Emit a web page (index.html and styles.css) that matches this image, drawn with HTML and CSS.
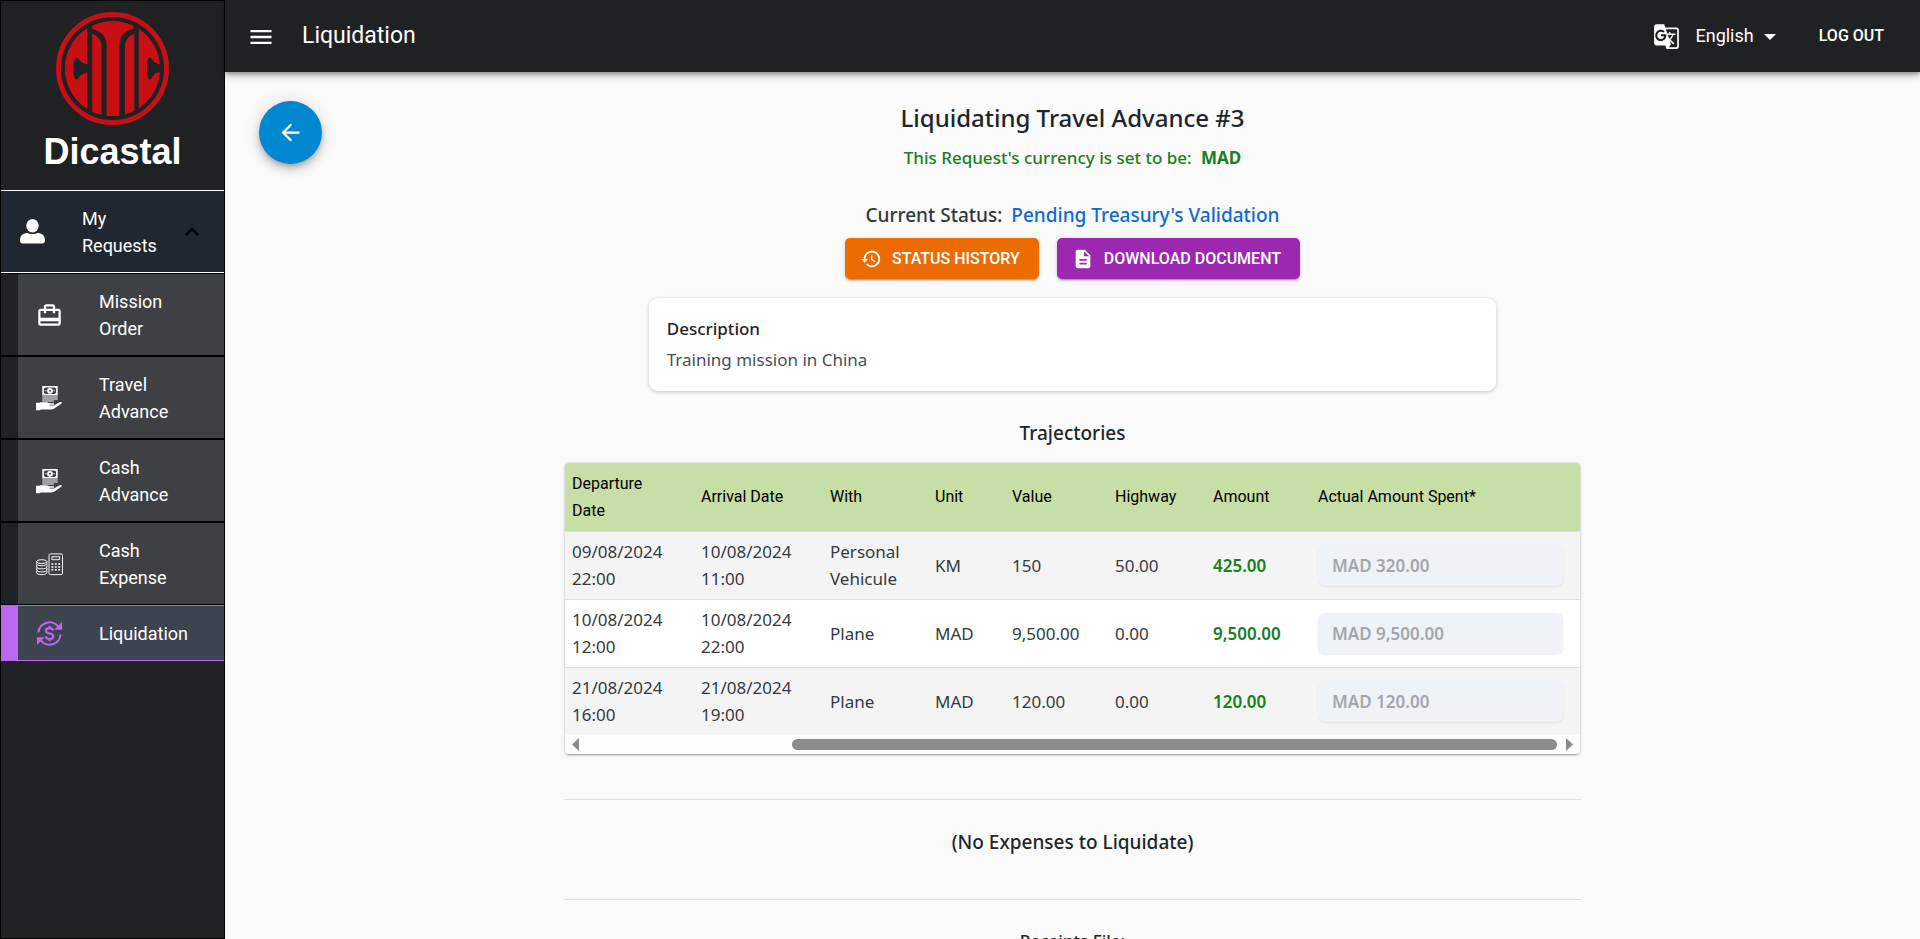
FILE: index.html
```html
<!DOCTYPE html>
<html lang="en">
<head>
<meta charset="utf-8">
<title>Liquidation</title>
<meta name="viewport" content="width=device-width, initial-scale=1">
<link rel="stylesheet" href="styles.css">
</head>
<body>
<svg class="defs" aria-hidden="true">
  <symbol id="hand-cash" viewBox="0 0 28 26">
    <path fill-rule="evenodd" d="M6.500 0h16v10h-16zM9.500 1.700L8.200 3v4l1.300 1.300h10L20.800 7V3l-1.300-1.300z"/>
    <path fill-rule="evenodd" d="M14.500 2a3 3 0 1 0 0 6 3 3 0 0 0 0-6zm0 2a1 1 0 1 1 0 2 1 1 0 0 1 0-2z"/>
    <path d="M9.500 4.500H11v1H9.500zM18 4.500h1.500v1H18zM6.500 11h16v1h-16zM6.500 13h16v1h-16zM6.500 15h12v1h-12z"/>
    <path d="M0 17.500h3.500l1-.5h6c1.500 0 2.500.8 4 .8h3.500c1.200 0 1.200 1.700 0 1.700h-4v.8h4.500l6-3.300c1.500-.8 3 .2 2 1.200l-7 5c-1 .8-2 1.200-3.500 1.200H5l-1 .8H0z"/>
  </symbol>
</svg>
<div class="app">
  <aside class="sidebar">
    <div class="brand">
      <svg class="brand-logo" viewBox="0 0 114 114" role="img" aria-label="CITIC">
        <defs>
          <clipPath id="disc"><circle cx="57" cy="57" r="48"/></clipPath>
        </defs>
        <circle class="line" cx="57" cy="57" r="54.500" stroke="#c80f16" stroke-width="5"/>
        <g clip-path="url(#disc)" fill="#c80f16">
          <path d="M31.500 0V53C27 52 24 50 22 46.500c-1-.8-2.500-.8-3 .5-2 6-2 14 0 20 .5 1.300 2 1.300 3 .5 2-3.500 5-5.500 9.500-6.500V114H0V0z"/>
          <path d="M83.500 0V114H114V61h-9c-4.500-1-7.500 3-9 6.500-1 .8-2.500.6-3-.5-1.500-6-1.500-14 0-20 .5-1.300 2-1.300 3-.5 1.500 3.500 4.500 5.500 9 6.500h9V0z"/>
          <path d="M36.500 22c6 2 9.500 7 9.500 13v79h-9.500zM79 22c-6 2-9.500 7-9.500 13v79H79z"/>
          <path d="M36.500 14c11-7 31-7 41.500 0v3c-10 3-14 8-14 16v72H51V33c0-8-5-13-14.500-16z"/>
        </g>
      </svg>
      <span class="brand-name">Dicastal</span>
    </div>
    <nav>
      <button class="group" type="button" aria-expanded="true">
        <svg class="icon-user" viewBox="0 0 26 26" aria-hidden="true"><ellipse cx="13" cy="7" rx="6.500" ry="7"/><path d="M0 22c0-5 3.500-7.500 8-7.500 2 1.500 8 1.500 10 0 4.500 0 8 2.500 8 7.500 0 2-1 3.500-3 3.500H3c-2 0-3-1.500-3-3.500z"/></svg>
        <span class="nav-label">My Requests</span>
        <svg class="icon-chevron line" viewBox="0 0 14 9" stroke="#000" stroke-width="2.500" aria-hidden="true"><path d="M1 8l6-6 6 6"/></svg>
      </button>
      <ul class="subnav">
        <li><a class="item" href="#mission"><svg class="nav-icon" viewBox="0 0 24 24" aria-hidden="true"><path d="M20 6h-3V4c0-1.110-.89-2-2-2H9c-1.110 0-2 .89-2 2v2H4c-1.110 0-2 .89-2 2v11c0 1.110.89 2 2 2h16c1.110 0 2-.89 2-2V8c0-1.110-.89-2-2-2zM9 4h6v2H9V4zm11 15H4v-2h16v2zm0-5H4V8h3v2h2V8h6v2h2V8h3v6z"/></svg><span class="nav-label">Mission Order</span></a></li>
        <li><a class="item" href="#travel"><svg class="nav-icon" aria-hidden="true"><use href="#hand-cash"/></svg><span class="nav-label">Travel Advance</span></a></li>
        <li><a class="item" href="#cash-advance"><svg class="nav-icon" aria-hidden="true"><use href="#hand-cash"/></svg><span class="nav-label">Cash Advance</span></a></li>
        <li><a class="item" href="#cash-expense"><svg class="nav-icon line" viewBox="0 0 28 26" stroke="#fff" aria-hidden="true"><rect x="13.500" y="2" width="14" height="21.500" rx="1.500"/><path d="M16.500 5h8v3h-8z"/><path d="M16 12.500h2m1.500 0h2m1.500 0h2M16 15.500h2m1.500 0h2m1.500 0h2M16 18.500h2m1.500 0h2m1.500 0h2" stroke-width="1.500"/><ellipse cx="6" cy="10" rx="5.300" ry="2"/><path d="M.7 10v2.200c0 2.700 10.600 2.700 10.600 0V10M.7 13v2.500c0 2.700 10.600 2.700 10.600 0V13M.7 16.200v2.500c0 2.700 10.600 2.700 10.600 0v-2.500M.7 19.500v2c0 2.700 10.600 2.700 10.600 0v-2"/></svg><span class="nav-label">Cash Expense</span></a></li>
        <li class="active"><a class="item" href="#liquidation" aria-current="page"><svg class="nav-icon line" viewBox="0 0 28 28" stroke="#bb68f0" stroke-width="2.200" aria-hidden="true"><path d="M2.500 13A11.500 11.500 0 0 1 23.500 7.500M25.500 15A11.500 11.500 0 0 1 4.500 20.500"/><path class="solid" d="M27 2v8h-8zM1 26v-8h8z"/><path d="M17.800 10.800c-.5-1.800-1.800-2.400-3.800-2.400-2.200 0-3.800 1-3.800 2.800 0 4 7.800 1.700 7.800 5.700 0 1.700-1.700 2.800-4 2.800s-3.700-.8-4-2.700M14 6v2.500M14 19.500V22"/></svg><span class="nav-label">Liquidation</span></a></li>
      </ul>
    </nav>
  </aside>

  <div class="page">
    <header class="topbar">
      <button class="icon-button" type="button" aria-label="Toggle menu"><svg class="icon-menu" viewBox="0 0 24 24" aria-hidden="true"><path d="M3 18h18v-2H3v2zm0-5h18v-2H3v2zm0-7v2h18V6H3z"/></svg></button>
      <span class="topbar-title">Liquidation</span>
      <button class="language" type="button">
        <svg class="icon-translate" viewBox="0 0 24 24" aria-hidden="true"><path d="M21 4H11l-1-3H3c-1.100 0-2 .9-2 2v15c0 1.100.9 2 2 2h8l1 3h9c1.100 0 2-.9 2-2V6c0-1.100-.9-2-2-2zM7 16c-2.760 0-5-2.240-5-5s2.240-5 5-5c1.350 0 2.480.5 3.350 1.300L9.030 8.570c-.38-.36-1.040-.78-2.030-.78-1.740 0-3.150 1.440-3.150 3.210S5.260 14.210 7 14.210c2.010 0 2.840-1.440 2.920-2.410H7v-1.710h4.680c.07.31.12.61.12 1.020C11.800 13.970 9.890 16 7 16zm6.170-5.420h3.700c-.43 1.250-1.110 2.430-2.050 3.470-.31-.35-.6-.72-.86-1.100l-.79-2.370zm8.330 9.920c0 .55-.45 1-1 1H14l2-2.500-1.040-3.100 3.100 3.100.92-.92-3.300-3.250.02-.02c1.130-1.250 1.930-2.690 2.400-4.220H20v-1.300h-4.530V8h-1.290v1.290h-1.440L11.460 5.500h9.040c.55 0 1 .45 1 1v14z"/></svg>
        <span>English</span>
        <svg class="icon-caret" viewBox="0 0 12 6" aria-hidden="true"><path d="M0 0h12L6 6z"/></svg>
      </button>
      <button class="logout" type="button">LOG OUT</button>
    </header>

    <main class="content">
      <button class="back" type="button" aria-label="Back"><svg class="icon-back" viewBox="0 0 24 24" aria-hidden="true"><path d="M20 11H7.830l5.590-5.590L12 4l-8 8 8 8 1.410-1.410L7.830 13H20v-2z"/></svg></button>

      <h1 class="title">Liquidating Travel Advance #3</h1>
      <p class="currency">This Request's currency is set to be: <strong>MAD</strong></p>
      <p class="status">Current Status: <span class="status-value">Pending Treasury's Validation</span></p>

      <div class="actions">
        <button class="button button-orange" type="button"><svg class="button-icon" viewBox="0 0 24 24" aria-hidden="true"><path d="M13 3c-4.970 0-9 4.030-9 9H1l3.890 3.890.07.14L9 12H6c0-3.870 3.130-7 7-7s7 3.130 7 7-3.130 7-7 7c-1.930 0-3.680-.79-4.940-2.060l-1.420 1.420C8.270 19.990 10.510 21 13 21c4.970 0 9-4.030 9-9s-4.030-9-9-9zm-1 5v5l4.280 2.540.72-1.210-3.500-2.080V8H12z"/></svg>STATUS HISTORY</button>
        <button class="button button-purple" type="button"><svg class="button-icon" viewBox="0 0 24 24" aria-hidden="true"><path d="M14 2H6c-1.100 0-1.990.9-1.990 2L4 20c0 1.100.89 2 1.990 2H18c1.100 0 2-.9 2-2V8l-6-6zm2 16H8v-2h8v2zm0-4H8v-2h8v2zm-3-5V3.500L18.500 9H13z"/></svg>DOWNLOAD DOCUMENT</button>
      </div>

      <section class="card">
        <h2 class="card-title">Description</h2>
        <p class="card-text">Training mission in China</p>
      </section>

      <h2 class="section-title">Trajectories</h2>
      <div class="table-frame">
        <table class="grid">
          <colgroup><col class="col-date"><col class="col-date"><col class="col-with"><col class="col-unit"><col class="col-value"><col class="col-highway"><col class="col-amount"><col></colgroup>
          <thead>
            <tr><th>Departure Date</th><th>Arrival Date</th><th>With</th><th>Unit</th><th>Value</th><th>Highway</th><th>Amount</th><th>Actual Amount Spent*</th></tr>
          </thead>
          <tbody>
            <tr><td>09/08/2024 22:00</td><td>10/08/2024 11:00</td><td>Personal Vehicule</td><td>KM</td><td>150</td><td>50.00</td><td class="amount">425.00</td><td><input class="spent" type="text" aria-label="Actual amount spent, trajectory 1" value="MAD 320.00" disabled></td></tr>
            <tr><td>10/08/2024 12:00</td><td>10/08/2024 22:00</td><td>Plane</td><td>MAD</td><td>9,500.00</td><td>0.00</td><td class="amount">9,500.00</td><td><input class="spent" type="text" aria-label="Actual amount spent, trajectory 2" value="MAD 9,500.00" disabled></td></tr>
            <tr><td>21/08/2024 16:00</td><td>21/08/2024 19:00</td><td>Plane</td><td>MAD</td><td>120.00</td><td>0.00</td><td class="amount">120.00</td><td><input class="spent" type="text" aria-label="Actual amount spent, trajectory 3" value="MAD 120.00" disabled></td></tr>
          </tbody>
        </table>
        <div class="scrollbar" aria-hidden="true">
          <svg class="scroll-arrow" viewBox="0 0 7 13"><path d="M7 0v13L0 6.500z"/></svg>
          <div class="track"><div class="thumb"></div></div>
          <svg class="scroll-arrow" viewBox="0 0 7 13"><path d="M0 0v13l7-6.500z"/></svg>
        </div>
      </div>

      <hr class="divider">
      <h2 class="section-title section-empty">(No Expenses to Liquidate)</h2>
      <hr class="divider divider-last">
      <h2 class="section-receipts">Receipts File:</h2>
    </main>
  </div>
</div>
</body>
</html>
```
FILE: styles.css
```css
*, *::before, *::after { box-sizing: border-box; }
body {
  margin: 0;
  background: #fafafa;
  color: #212529;
  font-family: "Noto Sans", "Open Sans", sans-serif;
  font-size: 17px;
  line-height: 27px;
}
h1, h2, p, ul { margin: 0; padding: 0; }
ul { list-style: none; }
button { border: 0; margin: 0; padding: 0; background: none; color: inherit; font: inherit; cursor: pointer; }
svg { display: block; flex: none; fill: currentColor; }
.line { fill: none; }
.solid { fill: #bb68f0; stroke: none; }
.defs { position: absolute; width: 0; height: 0; }

.app { display: flex; height: 100vh; }

/* Sidebar */
.sidebar {
  flex: none;
  width: 225px;
  background: #202123;
  border: 1px solid #000;
  color: #fff;
  font-family: Roboto, sans-serif;
  font-size: 18px;
}
.brand { display: flex; flex-direction: column; align-items: center; height: 189px; padding-top: 11px; }
.brand-logo { width: 113px; height: 113px; }
.brand-name { margin-top: 6px; font: bold 36px/41px "Liberation Sans", Arial, sans-serif; }
.group {
  display: flex;
  align-items: center;
  width: 100%;
  height: 83px;
  padding: 0 25px 0 19px;
  background: #212730;
  border-top: 1px solid #fff;
  border-bottom: 1px solid #fff;
  text-align: left;
}
.icon-user { width: 25px; height: 25px; }
.group .nav-label { width: 80px; margin-left: 37px; margin-right: auto; }
.icon-chevron { width: 14px; height: 9px; }
.subnav li { padding-left: 17px; border-top: 1px solid #000; border-bottom: 1px solid #000; }
.item {
  display: flex;
  align-items: center;
  padding: 14px 20px 13px 18px;
  background: #3f4043;
  color: #fff;
  text-decoration: none;
}
.subnav .active { background: #bb68f0; border-color: #bb68f0; }
.active .item { background: #3d444f; }
.nav-icon { width: 27px; height: 27px; }
.item .nav-label { margin-left: 36px; }

/* Top bar */
.page { display: flex; flex: 1; flex-direction: column; min-width: 0; }
.topbar {
  z-index: 1;
  display: flex;
  flex: none;
  align-items: center;
  height: 72px;
  padding: 0 36px 2px 22px;
  background: #202123;
  box-shadow: 0 2px 4px rgba(0, 0, 0, .3), 0 4px 8px rgba(0, 0, 0, .2);
  color: #fff;
  font-family: Roboto, sans-serif;
  font-size: 18px;
}
.icon-button { padding-top: 3px; }
.icon-menu { width: 28px; height: 28px; }
.topbar-title { margin-left: 27px; font-size: 23px; }
.language { display: flex; align-items: center; margin-left: auto; }
.icon-translate { width: 27px; height: 27px; margin: 3px 15px 0 0; }
.icon-caret { width: 12px; height: 6px; margin: 3px 0 0 10px; }
.logout { margin-left: 43px; font-size: 16px; font-weight: 500; }

/* Content */
.content {
  position: relative;
  display: flex;
  flex: 1;
  flex-direction: column;
  align-items: center;
  overflow-y: auto;
  padding-top: 28px;
  scrollbar-width: none;
}
.content > * { flex: none; }
.back {
  position: absolute;
  top: 29px;
  left: 34px;
  display: grid;
  place-items: center;
  width: 63px;
  height: 63px;
  border-radius: 50%;
  background: #0288d1;
  box-shadow: 0 3px 5px -1px rgba(0, 0, 0, .2), 0 6px 10px rgba(0, 0, 0, .14), 0 1px 18px rgba(0, 0, 0, .12);
  color: #fff;
}
.icon-back { width: 27px; height: 27px; }
.title { font-size: 24px; font-weight: 500; line-height: 36px; }
.currency { margin-top: 8px; color: #1b7e20; font-weight: 500; }
.currency strong { margin-left: 5px; font-weight: 700; }
.status { margin-top: 31px; color: #33373c; font-size: 19px; font-weight: 500; }
.status-value { margin-left: 4px; color: #0f6ad0; }
.actions { display: flex; gap: 18px; margin-top: 9px; }
.button {
  display: flex;
  align-items: center;
  height: 41px;
  padding: 0 19px 0 15px;
  border-radius: 5px;
  box-shadow: 0 3px 1px -2px rgba(0, 0, 0, .2), 0 2px 2px rgba(0, 0, 0, .14), 0 1px 5px rgba(0, 0, 0, .12);
  color: #fff;
  font: 500 16px/27px Roboto, sans-serif;
}
.button-orange { background: #ed6c02; }
.button-purple { background: #9c27b0; }
.button-icon { width: 22px; height: 22px; margin-right: 10px; }
.card {
  width: 50%;
  margin-top: 19px;
  padding: 17px 18px 18px;
  border-radius: 9px;
  background: #fff;
  box-shadow: 0 1px 4px rgba(0, 0, 0, .2);
}
.card-title { font-size: 17px; font-weight: 500; line-height: 27px; }
.card-text { margin-top: 4px; color: #4a4e57; }
.section-title { font-size: 19px; font-weight: 500; line-height: 27px; }
.card + .section-title { margin-top: 29px; }

/* Trajectories table */
.table-frame {
  width: 60%;
  min-width: 900px;
  margin-top: 15px;
  overflow: hidden;
  border: 1px solid #e0e0e0;
  border-bottom-color: #ababab;
  border-radius: 5px;
  box-shadow: 0 1px 2px rgba(0, 0, 0, .15);
}
.grid { width: 100%; border-collapse: collapse; table-layout: fixed; }
.col-date { width: 129px; }
.col-with { width: 105px; }
.col-unit { width: 77px; }
.col-value { width: 103px; }
.col-highway { width: 98px; }
.col-amount { width: 105px; }
.grid th { height: 68px; padding: 6px 30px 6px 7px; background: #c7dea6; color: #000; font: 400 16px/27px Roboto, sans-serif; text-align: left; white-space: nowrap; }
.grid th:first-child { white-space: normal; }
.grid td { height: 68px; padding: 6px 7px; border-top: 1px solid #e0e0e0; background: #fff; color: #343a40; }
.grid tbody tr:nth-child(odd) td { background: #f4f4f4; }
.grid td.amount { color: #1b7e20; font-weight: 600; }
.grid td:last-child { padding-right: 17px; }
.spent {
  display: block;
  width: 100%;
  height: 41px;
  padding: 0 14px;
  border: 0;
  border-radius: 7px;
  background: #eff2f7;
  box-shadow: 0 1px 2px rgba(0, 0, 0, .08);
  color: #a3a7ad;
  font: 600 17px/27px "Noto Sans", "Open Sans", sans-serif;
}
.scrollbar { display: flex; align-items: center; height: 19px; padding: 0 7px; background: #fcfcfc; color: #8b8b8b; }
.scroll-arrow { width: 7px; height: 13px; }
.track { flex: 1; margin: 0 9px; }
.thumb { width: 79%; height: 11px; margin-left: auto; border-radius: 6px; background: #8b8b8b; }

.divider { width: 60%; margin: 44px 0 0; border: 0; border-top: 1px solid #e0e0e0; }
.section-empty { margin-top: 29px; }
.divider-last { margin-top: 43px; }
.section-receipts { margin-top: 27px; padding-bottom: 40px; font-size: 17px; font-weight: 500; line-height: 27px; }
```
